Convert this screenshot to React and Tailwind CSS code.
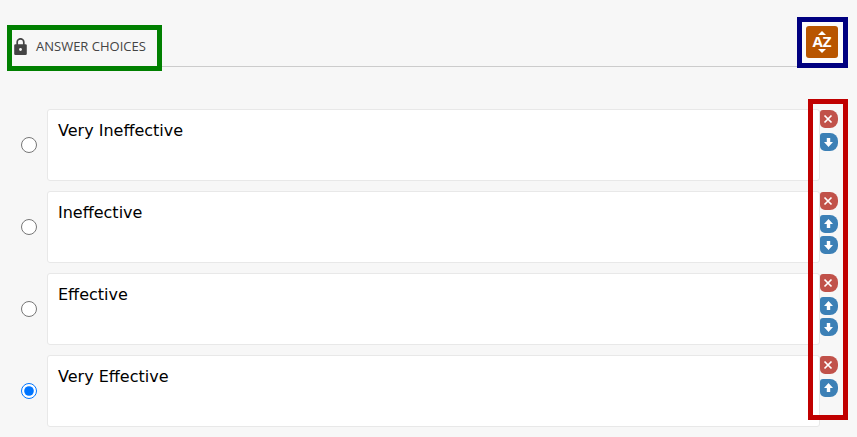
import React, { useState } from 'react';

const choices = [
  { id: 'very-ineffective', text: 'Very Ineffective' },
  { id: 'ineffective', text: 'Ineffective' },
  { id: 'effective', text: 'Effective' },
  { id: 'very-effective', text: 'Very Effective' },
];

const LockIcon = () => (
  <svg viewBox="0 0 13 17" className="w-[13px] h-[17px] shrink-0" aria-hidden="true">
    <path d="M3.2 8V4.1a3.3 3.3 0 0 1 6.6 0V8" fill="none" stroke="#444" strokeWidth="1.7" />
    <rect x="0.2" y="6.2" width="12.6" height="10.8" rx="1.3" fill="#444" />
    <circle cx="6.5" cy="11.5" r="1.4" fill="#f7f7f7" />
  </svg>
);

const CrossIcon = () => (
  <svg viewBox="0 0 18 18" className="w-full h-full" aria-hidden="true">
    <path d="M4.5 5.5l7 7M11.5 5.5l-7 7" stroke="#fff" strokeWidth="1.7" />
  </svg>
);

const UpIcon = () => (
  <svg viewBox="0 0 18 18" className="w-full h-full" aria-hidden="true">
    <path d="M8.5 4L13 9h-2.8v4H6.8V9H4z" fill="#fff" />
  </svg>
);

const DownIcon = () => (
  <svg viewBox="0 0 18 18" className="w-full h-full" aria-hidden="true">
    <path d="M8.5 14L13 9h-2.8V5H6.8v4H4z" fill="#fff" />
  </svg>
);

const ChoiceRow = ({ choice, index, total, selected, onSelect, onChange, onRemove, onMove }) => (
  <li className="flex items-start">
    <div className="w-[47px] h-[72px] pl-[21px] flex items-center shrink-0">
      <input
        type="radio"
        name="correct"
        aria-label={`Mark ${choice.text} as the answer`}
        checked={selected}
        onChange={onSelect}
        className="w-4 h-4"
      />
    </div>
    <textarea
      aria-label={`Choice ${index + 1}`}
      value={choice.text}
      onChange={(e) => onChange(e.target.value)}
      className="flex-1 min-w-0 h-[72px] px-2.5 pt-[9px] resize-none bg-white border border-[#e8e8e8] rounded-[3px] text-base leading-6 text-black font-['DejaVu_Sans',Verdana,sans-serif]"
    />
    <div className="w-[37px] shrink-0 pt-px flex flex-col gap-[3px]">
      <button
        type="button"
        aria-label="Remove choice"
        onClick={onRemove}
        className="w-[18px] h-[18px] mb-0.5 bg-[#c1524a] rounded-r-lg rounded-tl-[3px] rounded-bl-[5px]"
      >
        <CrossIcon />
      </button>
      {index > 0 && (
        <button
          type="button"
          aria-label="Move up"
          onClick={() => onMove(-1)}
          className="w-[18px] h-[18px] bg-[#3c80b6] rounded-r-lg rounded-tl-[3px] rounded-bl-[5px]"
        >
          <UpIcon />
        </button>
      )}
      {index < total - 1 && (
        <button
          type="button"
          aria-label="Move down"
          onClick={() => onMove(1)}
          className="w-[18px] h-[18px] bg-[#3c80b6] rounded-r-lg rounded-tl-[3px] rounded-bl-[5px]"
        >
          <DownIcon />
        </button>
      )}
    </div>
  </li>
);

const App = () => {
  const [items, setItems] = useState(choices);
  const [answer, setAnswer] = useState('very-effective');

  const updateItem = (id, text) => {
    setItems(items.map((item) => (item.id === id ? { ...item, text } : item)));
  };

  const moveItem = (index, step) => {
    const next = [...items];
    const [moved] = next.splice(index, 1);
    next.splice(index + step, 0, moved);
    setItems(next);
  };

  return (
    <div className="min-h-screen bg-[#f7f7f7] pt-[17px] pb-2.5">
      {/* HEADER */}
      <header className="flex items-start pl-[7px] pr-[9px]">
        <div className="mt-2 h-[46px] pl-0.5 pr-[11px] pb-1 flex items-center gap-[9px] border-5 border-[#008000]">
          <LockIcon />
          <h2 className="text-[13px] leading-4 text-[#444] whitespace-nowrap font-['Open_Sans',sans-serif]">
            ANSWER CHOICES
          </h2>
        </div>
        <div className="flex-1 h-[50px] border-b border-[#ccc]" />
        <div className="w-[51px] h-[51px] flex items-start p-1 border-5 border-[#000080] bg-[#fcfcfc]">
          <button
            type="button"
            aria-label="Sort choices alphabetically"
            onClick={() => setItems([...items].sort((a, b) => a.text.localeCompare(b.text)))}
            className="w-8 h-8 flex flex-col items-center justify-center bg-[#b85500] rounded-[3px] text-white"
          >
            <svg viewBox="0 0 8 4" className="w-2 h-1" aria-hidden="true">
              <path d="M4 0l4 4H0z" fill="#fff" />
            </svg>
            <span className="mb-0.5 text-[15px] leading-3 font-bold font-['Open_Sans',sans-serif]">AZ</span>
            <svg viewBox="0 0 8 4" className="w-2 h-1" aria-hidden="true">
              <path d="M4 4l4-4H0z" fill="#fff" />
            </svg>
          </button>
        </div>
      </header>

      {/* CHOICES */}
      <section className="relative mt-[38px]">
        <ul className="flex flex-col gap-2.5">
          {items.map((item, index) => (
            <ChoiceRow
              key={item.id}
              choice={item}
              index={index}
              total={items.length}
              selected={answer === item.id}
              onSelect={() => setAnswer(item.id)}
              onChange={(text) => updateItem(item.id, text)}
              onRemove={() => setItems(items.filter((other) => other.id !== item.id))}
              onMove={(step) => moveItem(index, step)}
            />
          ))}
        </ul>
        {/* Frame round the row buttons */}
        <div className="absolute -top-2.5 bottom-[7px] right-[9px] w-10 border-5 border-[#c00000] pointer-events-none" />
      </section>
    </div>
  );
};

export default App;
